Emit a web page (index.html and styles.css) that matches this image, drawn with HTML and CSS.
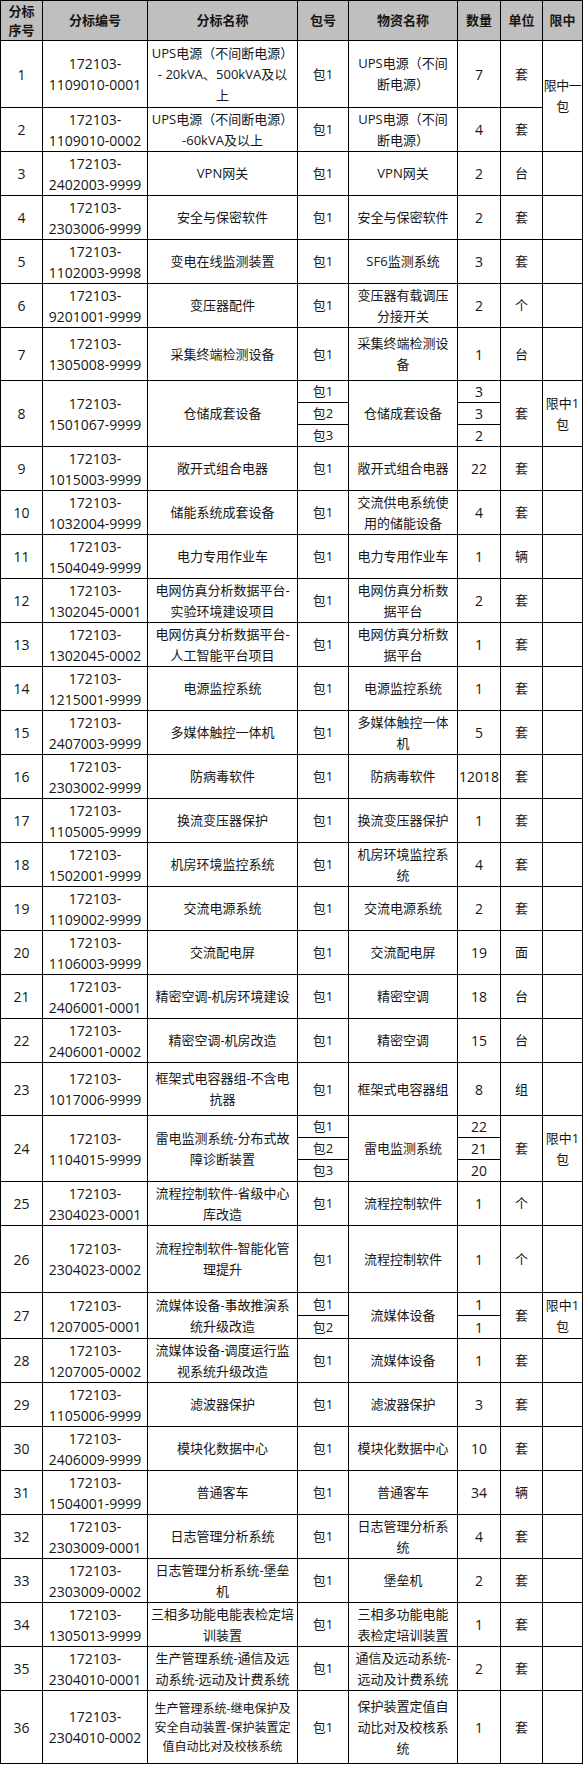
FILE: index.html
```html
<!DOCTYPE html>
<html lang="zh-CN">
<head>
<meta charset="utf-8">
<title>分标明细</title>
<link rel="stylesheet" href="styles.css">
</head>
<body>
<table class="sheet">
  <colgroup>
    <col class="c1"><col class="c2"><col class="c3"><col class="c4"><col class="c5"><col class="c6"><col class="c7"><col class="c8">
  </colgroup>
  <thead>
    <tr><th>分标<br>序号</th><th>分标编号</th><th>分标名称</th><th>包号</th><th>物资名称</th><th>数量</th><th>单位</th><th>限中</th></tr>
  </thead>
  <tbody>
    <tr class="h67"><td class="num">1</td><td class="num">172103-<br>1109010-0001</td><td>UPS电源（不间断电源）<br>- 20kVA、500kVA及以<br>上</td><td>包1</td><td>UPS电源（不间<br>断电源）</td><td class="num">7</td><td>套</td><td rowspan="2" class="tight">限中一<br>包</td></tr>
    <tr><td class="num">2</td><td class="num">172103-<br>1109010-0002</td><td>UPS电源（不间断电源）<br>-60kVA及以上</td><td>包1</td><td>UPS电源（不间<br>断电源）</td><td class="num">4</td><td>套</td></tr>
    <tr><td class="num">3</td><td class="num">172103-<br>2402003-9999</td><td>VPN网关</td><td>包1</td><td>VPN网关</td><td class="num">2</td><td>台</td><td></td></tr>
    <tr><td class="num">4</td><td class="num">172103-<br>2303006-9999</td><td>安全与保密软件</td><td>包1</td><td>安全与保密软件</td><td class="num">2</td><td>套</td><td></td></tr>
    <tr><td class="num">5</td><td class="num">172103-<br>1102003-9998</td><td>变电在线监测装置</td><td>包1</td><td>SF6监测系统</td><td class="num">3</td><td>套</td><td></td></tr>
    <tr><td class="num">6</td><td class="num">172103-<br>9201001-9999</td><td>变压器配件</td><td>包1</td><td>变压器有载调压<br>分接开关</td><td class="num">2</td><td>个</td><td></td></tr>
    <tr class="h53"><td class="num">7</td><td class="num">172103-<br>1305008-9999</td><td>采集终端检测设备</td><td>包1</td><td>采集终端检测设<br>备</td><td class="num">1</td><td>台</td><td></td></tr>
    <tr class="sub"><td rowspan="3" class="num">8</td><td rowspan="3" class="num">172103-<br>1501067-9999</td><td rowspan="3">仓储成套设备</td><td>包1</td><td rowspan="3">仓储成套设备</td><td class="num">3</td><td rowspan="3">套</td><td rowspan="3">限中1<br>包</td></tr>
    <tr class="sub"><td>包2</td><td class="num">3</td></tr>
    <tr class="sub"><td>包3</td><td class="num">2</td></tr>
    <tr><td class="num">9</td><td class="num">172103-<br>1015003-9999</td><td>敞开式组合电器</td><td>包1</td><td>敞开式组合电器</td><td class="num">22</td><td>套</td><td></td></tr>
    <tr><td class="num">10</td><td class="num">172103-<br>1032004-9999</td><td>储能系统成套设备</td><td>包1</td><td>交流供电系统使<br>用的储能设备</td><td class="num">4</td><td>套</td><td></td></tr>
    <tr><td class="num">11</td><td class="num">172103-<br>1504049-9999</td><td>电力专用作业车</td><td>包1</td><td>电力专用作业车</td><td class="num">1</td><td>辆</td><td></td></tr>
    <tr><td class="num">12</td><td class="num">172103-<br>1302045-0001</td><td>电网仿真分析数据平台-<br>实验环境建设项目</td><td>包1</td><td>电网仿真分析数<br>据平台</td><td class="num">2</td><td>套</td><td></td></tr>
    <tr><td class="num">13</td><td class="num">172103-<br>1302045-0002</td><td>电网仿真分析数据平台-<br>人工智能平台项目</td><td>包1</td><td>电网仿真分析数<br>据平台</td><td class="num">1</td><td>套</td><td></td></tr>
    <tr><td class="num">14</td><td class="num">172103-<br>1215001-9999</td><td>电源监控系统</td><td>包1</td><td>电源监控系统</td><td class="num">1</td><td>套</td><td></td></tr>
    <tr><td class="num">15</td><td class="num">172103-<br>2407003-9999</td><td>多媒体触控一体机</td><td>包1</td><td>多媒体触控一体<br>机</td><td class="num">5</td><td>套</td><td></td></tr>
    <tr><td class="num">16</td><td class="num">172103-<br>2303002-9999</td><td>防病毒软件</td><td>包1</td><td>防病毒软件</td><td class="num">12018</td><td>套</td><td></td></tr>
    <tr><td class="num">17</td><td class="num">172103-<br>1105005-9999</td><td>换流变压器保护</td><td>包1</td><td>换流变压器保护</td><td class="num">1</td><td>套</td><td></td></tr>
    <tr><td class="num">18</td><td class="num">172103-<br>1502001-9999</td><td>机房环境监控系统</td><td>包1</td><td>机房环境监控系<br>统</td><td class="num">4</td><td>套</td><td></td></tr>
    <tr><td class="num">19</td><td class="num">172103-<br>1109002-9999</td><td>交流电源系统</td><td>包1</td><td>交流电源系统</td><td class="num">2</td><td>套</td><td></td></tr>
    <tr><td class="num">20</td><td class="num">172103-<br>1106003-9999</td><td>交流配电屏</td><td>包1</td><td>交流配电屏</td><td class="num">19</td><td>面</td><td></td></tr>
    <tr><td class="num">21</td><td class="num">172103-<br>2406001-0001</td><td>精密空调-机房环境建设</td><td>包1</td><td>精密空调</td><td class="num">18</td><td>台</td><td></td></tr>
    <tr><td class="num">22</td><td class="num">172103-<br>2406001-0002</td><td>精密空调-机房改造</td><td>包1</td><td>精密空调</td><td class="num">15</td><td>台</td><td></td></tr>
    <tr class="h53"><td class="num">23</td><td class="num">172103-<br>1017006-9999</td><td>框架式电容器组-不含电<br>抗器</td><td>包1</td><td>框架式电容器组</td><td class="num">8</td><td>组</td><td></td></tr>
    <tr class="sub"><td rowspan="3" class="num">24</td><td rowspan="3" class="num">172103-<br>1104015-9999</td><td rowspan="3">雷电监测系统-分布式故<br>障诊断装置</td><td>包1</td><td rowspan="3">雷电监测系统</td><td class="num">22</td><td rowspan="3">套</td><td rowspan="3">限中1<br>包</td></tr>
    <tr class="sub"><td>包2</td><td class="num">21</td></tr>
    <tr class="sub"><td>包3</td><td class="num">20</td></tr>
    <tr><td class="num">25</td><td class="num">172103-<br>2304023-0001</td><td>流程控制软件-省级中心<br>库改造</td><td>包1</td><td>流程控制软件</td><td class="num">1</td><td>个</td><td></td></tr>
    <tr class="h67"><td class="num">26</td><td class="num">172103-<br>2304023-0002</td><td>流程控制软件-智能化管<br>理提升</td><td>包1</td><td>流程控制软件</td><td class="num">1</td><td>个</td><td></td></tr>
    <tr class="sub2"><td rowspan="2" class="num">27</td><td rowspan="2" class="num">172103-<br>1207005-0001</td><td rowspan="2">流媒体设备-事故推演系<br>统升级改造</td><td>包1</td><td rowspan="2">流媒体设备</td><td class="num">1</td><td rowspan="2">套</td><td rowspan="2">限中1<br>包</td></tr>
    <tr class="sub2"><td>包2</td><td class="num">1</td></tr>
    <tr><td class="num">28</td><td class="num">172103-<br>1207005-0002</td><td>流媒体设备-调度运行监<br>视系统升级改造</td><td>包1</td><td>流媒体设备</td><td class="num">1</td><td>套</td><td></td></tr>
    <tr><td class="num">29</td><td class="num">172103-<br>1105006-9999</td><td>滤波器保护</td><td>包1</td><td>滤波器保护</td><td class="num">3</td><td>套</td><td></td></tr>
    <tr><td class="num">30</td><td class="num">172103-<br>2406009-9999</td><td>模块化数据中心</td><td>包1</td><td>模块化数据中心</td><td class="num">10</td><td>套</td><td></td></tr>
    <tr><td class="num">31</td><td class="num">172103-<br>1504001-9999</td><td>普通客车</td><td>包1</td><td>普通客车</td><td class="num">34</td><td>辆</td><td></td></tr>
    <tr><td class="num">32</td><td class="num">172103-<br>2303009-0001</td><td>日志管理分析系统</td><td>包1</td><td>日志管理分析系<br>统</td><td class="num">4</td><td>套</td><td></td></tr>
    <tr><td class="num">33</td><td class="num">172103-<br>2303009-0002</td><td>日志管理分析系统-堡垒<br>机</td><td>包1</td><td>堡垒机</td><td class="num">2</td><td>套</td><td></td></tr>
    <tr><td class="num">34</td><td class="num">172103-<br>1305013-9999</td><td>三相多功能电能表检定培<br>训装置</td><td>包1</td><td>三相多功能电能<br>表检定培训装置</td><td class="num">1</td><td>套</td><td></td></tr>
    <tr><td class="num">35</td><td class="num">172103-<br>2304010-0001</td><td>生产管理系统-通信及远<br>动系统-远动及计费系统</td><td>包1</td><td>通信及远动系统-<br>远动及计费系统</td><td class="num">2</td><td>套</td><td></td></tr>
    <tr class="h73"><td class="num">36</td><td class="num">172103-<br>2304010-0002</td><td class="small">生产管理系统-继电保护及<br>安全自动装置-保护装置定<br>值自动比对及校核系统</td><td>包1</td><td>保护装置定值自<br>动比对及校核系<br>统</td><td class="num">1</td><td>套</td><td></td></tr>
  </tbody>
</table>
</body>
</html>
```

FILE: styles.css
```css
html, body {
  margin: 0;
  padding: 0;
  background: #ffffff;
}

body {
  font-family: "Open Sans", "Noto Sans CJK SC", sans-serif;
  font-size: 13px;
  color: #161616;
}

.sheet {
  border-collapse: collapse;
  table-layout: fixed;
  width: 583px;
}

.c1 { width: 42px; }
.c2 { width: 105px; }
.c3 { width: 150px; }
.c4 { width: 51px; }
.c5 { width: 109px; }
.c6 { width: 43px; }
.c7 { width: 42px; }
.c8 { width: 40px; }

.sheet th,
.sheet td {
  border: 1px solid #000000;
  padding: 0 1px;
  text-align: center;
  vertical-align: middle;
  line-height: 21px;
  white-space: nowrap;
  overflow: hidden;
}

.sheet th {
  background: #bfbfbf;
  font-weight: bold;
  line-height: 19px;
}

.sheet thead tr { height: 40px; }
.sheet tbody tr { height: 44px; }
.sheet tbody tr.h53 { height: 53px; }
.sheet tbody tr.h67 { height: 67px; }
.sheet tbody tr.h73 { height: 73px; }
.sheet tbody tr.sub { height: 22px; }
.sheet tbody tr.sub2 { height: 23px; }

.sheet td.num {
  font-size: 14px;
}

.sheet td.small {
  font-size: 12px;
  line-height: 19px;
}

.sheet td.tight {
  padding: 0;
  letter-spacing: -0.5px;
}
```
